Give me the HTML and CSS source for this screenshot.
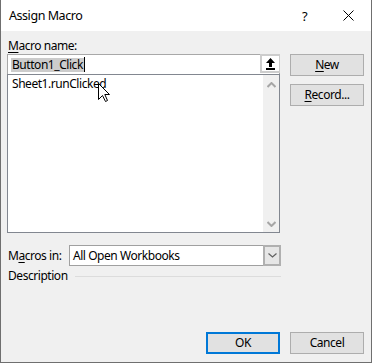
FILE: index.html
```html
<!DOCTYPE html>
<html>
<head>
<meta charset="utf-8">
<link rel="stylesheet" href="styles.css">
</head>
<body>
<div class="titlebar">
  <span class="title">Assign Macro</span>
  <span class="help">?</span>
  <svg class="close" width="11" height="11" viewBox="0 0 11 11"><path d="M0.5 0.5L10.5 10.5M10.5 0.5L0.5 10.5" stroke="#000" stroke-width="1"/></svg>
</div>
<main class="content">
  <div class="label-row"><u>M</u>acro name:</div>
  <div class="top-grid">
    <div class="picker">
      <div class="namebox">
        <span class="namefield"><span class="sel">Button1_Click</span><span class="caret"></span></span>
        <span class="upbtn"><svg width="9" height="12" viewBox="0 0 9 12"><path d="M4.5 0L9 5H6V9H3V5H0Z" fill="#000"/><rect x="0" y="10" width="9" height="2" fill="#000"/></svg></span>
      </div>
      <div class="listbox">
        <div class="items"><div class="item">Sheet1.runClicked</div></div>
        <div class="scrollbar">
          <svg width="9" height="6" viewBox="0 0 9 6"><path d="M0.5 5L4.5 1L8.5 5" fill="none" stroke="#a6a6a6" stroke-width="2"/></svg>
          <svg width="9" height="6" viewBox="0 0 9 6"><path d="M0.5 1L4.5 5L8.5 1" fill="none" stroke="#a6a6a6" stroke-width="2"/></svg>
        </div>
      </div>
    </div>
    <div class="side-buttons">
      <button class="btn"><u>N</u>ew</button>
      <button class="btn"><u>R</u>ecord...</button>
    </div>
  </div>
  <div class="macros-in">
    <span class="macros-label">M<u>a</u>cros in:</span>
    <div class="combo">
      <span class="combo-text">All Open Workbooks</span>
      <span class="drop"><svg width="9" height="5" viewBox="0 0 9 5"><path d="M0.5 0.5L4.5 4L8.5 0.5" fill="none" stroke="#606060" stroke-width="1.2"/></svg></span>
    </div>
  </div>
  <div class="description"><span>Description</span><span class="rule"></span></div>
</main>
<footer class="footer">
  <button class="btn ok">OK</button>
  <button class="btn">Cancel</button>
</footer>
<svg class="cursor" width="13" height="20" viewBox="0 0 13 20"><path d="M0.5 0.5V16.5L4.5 12.5L7.5 18.5L9.5 17.5L6.8 11.5H11.5Z" fill="#fff" stroke="#000" stroke-width="1" stroke-linejoin="miter"/></svg>
</body>
</html>
```

FILE: styles.css
```css
* { box-sizing: border-box; }
html, body { margin: 0; padding: 0; }
body {
  width: 372px;
  height: 363px;
  background: #f0f0f0;
  border: 1px solid #6f6f6f;
  border-top: none;
  font-family: "Noto Sans", "Liberation Sans", sans-serif;
  font-size: 12px;
  letter-spacing: -0.45px;
  color: #000;
  display: flex;
  flex-direction: column;
  position: relative;
  overflow: hidden;
}
u { text-decoration: underline; text-underline-offset: 2px; }
.titlebar {
  height: 31px;
  background: #fff;
  display: flex;
  align-items: center;
  padding-left: 8px;
}
.title { font-size: 12.5px; flex: 1; }
.help { width: 8px; margin-right: 33px; font-size: 13px; }
.close { margin-right: 17px; }
.content {
  padding: 7px 0 0 6px;
  display: flex;
  flex-direction: column;
}
.label-row { height: 16px; line-height: 16px; padding-left: 1px; }
.top-grid {
  display: grid;
  grid-template-columns: 273px 74px;
  column-gap: 10px;
}
.picker { display: flex; flex-direction: column; }
.namebox {
  height: 20px;
  background: #fff;
  border: 1px solid #a8a8a8;
  border-bottom: none;
  display: flex;
}
.namefield { flex: 1; display: flex; align-items: center; padding-left: 3px; }
.sel { background: #cccccc; line-height: 14px; height: 14px; display: inline-block; padding: 0 1px; }
.caret { width: 1px; height: 15px; background: #000; }
.upbtn {
  width: 20px;
  height: 19px;
  background: #fff;
  border: 2px solid #cdcdcd;
  border-right-width: 1px;
  display: flex;
  align-items: center;
  justify-content: center;
  margin-right: -1px;
  margin-top: -1px;
}
.listbox {
  height: 159px;
  background: #fff;
  border: 1px solid #828790;
  display: flex;
}
.items { flex: 1; padding: 1px 0 0 4px; }
.item { line-height: 16px; }
.scrollbar {
  width: 16px;
  background: #f0f0f0;
  display: flex;
  flex-direction: column;
  justify-content: space-between;
  align-items: center;
  padding: 7px 0 5px;
}
.side-buttons { display: flex; flex-direction: column; gap: 8px; }
.btn {
  font-family: inherit;
  font-size: 12px;
  letter-spacing: -0.45px;
  color: #000;
  background: #e1e1e1;
  border: 1px solid #adadad;
  width: 74px;
  height: 22px;
  padding: 0;
  line-height: 18px;
}
.macros-in {
  margin-top: 12px;
  display: flex;
  align-items: center;
  height: 21px;
}
.macros-label { width: 62px; padding-left: 1px; }
.combo {
  width: 212px;
  height: 21px;
  background: #fff;
  border: 1px solid #a0a0a0;
  display: flex;
  align-items: center;
}
.combo-text { flex: 1; padding-left: 3px; }
.drop {
  width: 18px;
  height: 21px;
  margin: -1px -1px -1px 0;
  background: #e6e6e6;
  border: 2px solid #b0b0b0;
  display: flex;
  align-items: center;
  justify-content: center;
}
.description {
  margin-top: 2px;
  width: 274px;
  height: 16px;
  line-height: 16px;
  display: flex;
  align-items: center;
  padding-left: 1px;
}
.rule { flex: 1; height: 1px; background: #dcdcdc; margin-left: 7px; }
.footer {
  margin-top: auto;
  display: flex;
  justify-content: flex-end;
  gap: 10px;
  padding: 0 7px 8px 0;
}
.ok { border: 2px solid #0078d7; }
.cursor { position: absolute; left: 97px; top: 83px; }
```
